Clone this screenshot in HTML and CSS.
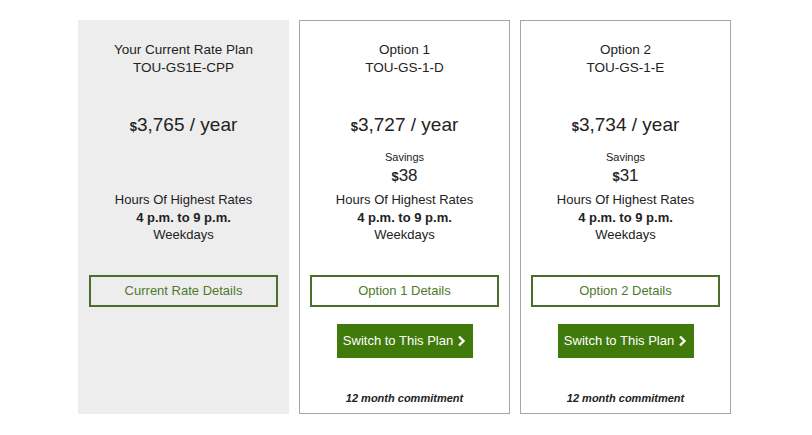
FILE: index.html
```html
<!DOCTYPE html>
<html>
<head>
    <title>Compare Rate Plans</title>
    <link rel="stylesheet" href="styles.css">
</head>
<body>
    <div class="plans">
        <div class="card current">
            <div class="plan-name">Your Current Rate Plan<br>TOU-GS1E-CPP</div>
            <div class="price"><span class="dollar">$</span>3,765 / year</div>
            <div class="savings empty"></div>
            <div class="hours">Hours Of Highest Rates<br><b>4 p.m. to 9 p.m.</b><br>Weekdays</div>
            <a class="details-btn" href="#">Current Rate Details</a>
        </div>

        <div class="card">
            <div class="plan-name">Option 1<br>TOU-GS-1-D</div>
            <div class="price"><span class="dollar">$</span>3,727 / year</div>
            <div class="savings">
                <div class="savings-label">Savings</div>
                <div class="savings-amount"><span class="dollar">$</span>38</div>
            </div>
            <div class="hours">Hours Of Highest Rates<br><b>4 p.m. to 9 p.m.</b><br>Weekdays</div>
            <a class="details-btn" href="#">Option 1 Details</a>
            <a class="switch-btn" href="#">Switch to This Plan <svg class="chev" width="9" height="12" viewBox="0 0 9 12"><path d="M2 1.5 L6.5 6 L2 10.5" fill="none" stroke="#fff" stroke-width="2.4"/></svg></a>
            <div class="commit">12 month commitment</div>
        </div>

        <div class="card">
            <div class="plan-name">Option 2<br>TOU-GS-1-E</div>
            <div class="price"><span class="dollar">$</span>3,734 / year</div>
            <div class="savings">
                <div class="savings-label">Savings</div>
                <div class="savings-amount"><span class="dollar">$</span>31</div>
            </div>
            <div class="hours">Hours Of Highest Rates<br><b>4 p.m. to 9 p.m.</b><br>Weekdays</div>
            <a class="details-btn" href="#">Option 2 Details</a>
            <a class="switch-btn" href="#">Switch to This Plan <svg class="chev" width="9" height="12" viewBox="0 0 9 12"><path d="M2 1.5 L6.5 6 L2 10.5" fill="none" stroke="#fff" stroke-width="2.4"/></svg></a>
            <div class="commit">12 month commitment</div>
        </div>
    </div>
</body>
</html>
```

FILE: styles.css
```css
body {
    margin: 0;
    font-family: "Liberation Sans", Arial, sans-serif;
    background-color: #fff;
    color: #222;
}

.plans {
    display: flex;
    gap: 10px;
    padding: 20px 0 0 78px;
}

.card {
    width: 211px;
    height: 394px;
    box-sizing: border-box;
    border: 1px solid #a6a6a6;
    padding: 20px 10px 0;
    display: flex;
    flex-direction: column;
    align-items: center;
    text-align: center;
}

.card.current {
    background-color: #ededed;
    border-color: #ededed;
}

.plan-name {
    font-size: 13.5px;
    line-height: 18px;
}

.price {
    margin-top: 36px;
    font-size: 19px;
    line-height: 24px;
}

.dollar {
    font-size: 13px;
    font-weight: bold;
}

.savings {
    height: 37px;
    margin-top: 10px;
}

.savings-label {
    font-size: 11px;
    line-height: 16px;
}

.savings-amount {
    font-size: 17px;
    line-height: 21px;
}

.hours {
    margin-top: 5px;
    font-size: 13px;
    line-height: 17.5px;
}

.details-btn {
    display: block;
    align-self: stretch;
    margin-top: 31px;
    height: 32px;
    box-sizing: border-box;
    border: 2px solid #4d6d2b;
    color: #4f7a2c;
    font-size: 13px;
    line-height: 28px;
    text-decoration: none;
}

.switch-btn {
    display: flex;
    align-items: center;
    justify-content: center;
    gap: 4px;
    margin-top: 17px;
    width: 136px;
    height: 34px;
    background-color: #3f7a0b;
    color: #fff;
    font-size: 13px;
    text-decoration: none;
}

.commit {
    margin-top: 33px;
    font-size: 11px;
    line-height: 14px;
    font-weight: bold;
    font-style: italic;
}
```
